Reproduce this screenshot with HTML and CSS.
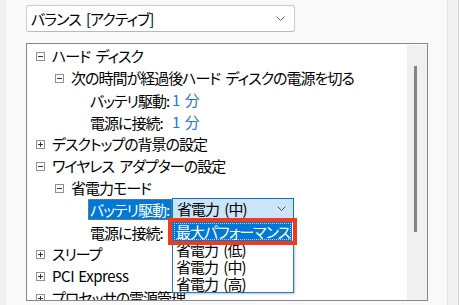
FILE: index.html
```html
<!DOCTYPE html>
<html lang="ja">
<head>
    <meta charset="UTF-8">
    <title>電源オプション - 詳細設定</title>
    <link rel="stylesheet" href="styles.css">
</head>
<body>
    <div class="window">
        <div class="edge-left"></div>
        <div class="content">
            <!-- 電源プラン -->
            <div class="plan-select">
                <span>バランス [アクティブ]</span>
                <svg class="chevron" width="9" height="5" viewBox="0 0 9 5"><polyline points="0.5,0.5 4.5,4.5 8.5,0.5" fill="none" stroke="#606060"/></svg>
            </div>

            <!-- 設定ツリー -->
            <div class="tree">
                <div class="tree-items">
                    <div class="row lv0">
                        <svg class="expander" viewBox="0 0 9 9"><rect x="0.5" y="0.5" width="8" height="8" fill="#fff" stroke="#919191"/><path d="M2 4.5h5" stroke="#333"/></svg>
                        <span>ハード ディスク</span>
                    </div>
                    <div class="row lv1">
                        <svg class="expander" viewBox="0 0 9 9"><rect x="0.5" y="0.5" width="8" height="8" fill="#fff" stroke="#919191"/><path d="M2 4.5h5" stroke="#333"/></svg>
                        <span>次の時間が経過後ハード ディスクの電源を切る</span>
                    </div>
                    <div class="row lv2">
                        <span class="label">バッテリ駆動:</span>
                        <span class="value">1 分</span>
                    </div>
                    <div class="row lv2">
                        <span class="label">電源に接続:</span>
                        <span class="value">1 分</span>
                    </div>
                    <div class="row lv0">
                        <svg class="expander" viewBox="0 0 9 9"><rect x="0.5" y="0.5" width="8" height="8" fill="#fff" stroke="#919191"/><path d="M2 4.5h5M4.5 2v5" stroke="#333"/></svg>
                        <span>デスクトップの背景の設定</span>
                    </div>
                    <div class="row lv0">
                        <svg class="expander" viewBox="0 0 9 9"><rect x="0.5" y="0.5" width="8" height="8" fill="#fff" stroke="#919191"/><path d="M2 4.5h5" stroke="#333"/></svg>
                        <span>ワイヤレス アダプターの設定</span>
                    </div>
                    <div class="row lv1">
                        <svg class="expander" viewBox="0 0 9 9"><rect x="0.5" y="0.5" width="8" height="8" fill="#fff" stroke="#919191"/><path d="M2 4.5h5" stroke="#333"/></svg>
                        <span>省電力モード</span>
                    </div>
                    <div class="row lv2 editing">
                        <span class="label selected">バッテリ駆動:</span>
                        <div class="combo">
                            <span>省電力 (中)</span>
                            <svg class="chevron" width="9" height="5" viewBox="0 0 9 5"><polyline points="0.5,0.5 4.5,4.5 8.5,0.5" fill="none" stroke="#505050"/></svg>
                            <div class="combo-list">
                                <div class="option active">最大パフォーマンス</div>
                                <div class="option">省電力 (低)</div>
                                <div class="option">省電力 (中)</div>
                                <div class="option">省電力 (高)</div>
                                <div class="mark"></div>
                            </div>
                        </div>
                    </div>
                    <div class="row lv2">
                        <span class="label">電源に接続:</span>
                    </div>
                    <div class="row lv0">
                        <svg class="expander" viewBox="0 0 9 9"><rect x="0.5" y="0.5" width="8" height="8" fill="#fff" stroke="#919191"/><path d="M2 4.5h5M4.5 2v5" stroke="#333"/></svg>
                        <span>スリープ</span>
                    </div>
                    <div class="row lv0">
                        <svg class="expander" viewBox="0 0 9 9"><rect x="0.5" y="0.5" width="8" height="8" fill="#fff" stroke="#919191"/><path d="M2 4.5h5M4.5 2v5" stroke="#333"/></svg>
                        <span class="latin">PCI Express</span>
                    </div>
                    <div class="row lv0">
                        <svg class="expander" viewBox="0 0 9 9"><rect x="0.5" y="0.5" width="8" height="8" fill="#fff" stroke="#919191"/><path d="M2 4.5h5M4.5 2v5" stroke="#333"/></svg>
                        <span>プロセッサの電源管理</span>
                    </div>
                </div>
                <div class="scrollbar"><div class="thumb"></div></div>
            </div>
        </div>
        <div class="edge-right"></div>
    </div>
</body>
</html>
```

FILE: styles.css
```css
/* Base */
body {
    margin: 0;
    font-family: "Noto Sans CJK JP", "Noto Sans", sans-serif;
    font-size: 15px;
    font-feature-settings: "palt";
    letter-spacing: -1px;
    word-spacing: 3px;
    background-color: #f9f9f9;
    color: #000;
}

.window {
    display: flex;
    height: 305px;
    overflow: hidden;
}

.edge-left {
    width: 6px;
    background-color: #efefef;
}

.content {
    flex: 1;
    padding: 5px 0 0 20px;
}

.edge-right {
    width: 10px;
    background-color: #f0f0f0;
    border-left: 1px solid #e2e2e2;
    border-right: 1px solid #d0d0d0;
}

/* Plan dropdown */
.plan-select {
    width: 269px;
    height: 27px;
    box-sizing: border-box;
    display: flex;
    align-items: center;
    justify-content: space-between;
    padding: 0 9px 0 4px;
    background: white;
    border: 1px solid #cccccc;
    border-bottom-color: #b9b9b9;
    border-radius: 3px;
    margin-bottom: 11px;
    line-height: 20px;
}

.chevron {
    flex: none;
}

/* Tree */
.tree {
    width: 402px;
    height: 258px;
    box-sizing: border-box;
    border: 1px solid #84878d;
    background: white;
    display: grid;
    grid-template-columns: 1fr 20px;
}

.tree-items {
    padding-top: 1px;
    overflow: hidden;
}

.row {
    height: 22px;
    display: flex;
    align-items: center;
    white-space: nowrap;
    line-height: 20px;
}

.lv0 {
    padding-left: 9px;
}

.lv1 {
    padding-left: 28px;
}

.lv2 {
    padding-left: 61px;
}

.expander {
    width: 9px;
    height: 9px;
    flex: none;
    margin-right: 7px;
}

.latin {
    letter-spacing: -0.4px;
    word-spacing: 1px;
}

.label {
    width: 84px;
    box-sizing: border-box;
    padding: 0 2px;
    line-height: 21px;
    flex: none;
}

.label.selected {
    background-color: #0078d7;
    color: white;
    outline: 1px dotted #c8782a;
    outline-offset: -1px;
}

.value {
    color: #1f77d4;
}

/* Open combo box */
.editing {
    align-items: flex-start;
    position: relative;
    z-index: 1;
}

.combo {
    position: relative;
    width: 122px;
    height: 21px;
    box-sizing: border-box;
    margin-top: -1px;
    display: flex;
    align-items: center;
    justify-content: space-between;
    padding: 0 7px 0 4px;
    background-color: #cce4f7;
    border: 1px solid #0078d7;
    line-height: 19px;
}

.combo-list {
    position: absolute;
    top: calc(100% + 1px);
    left: -1px;
    width: 122px;
    box-sizing: border-box;
    background: white;
    border: 1px solid #2a79c9;
    box-shadow: 1px 1px 2px rgba(0,0,0,0.25);
    padding-top: 2px;
}

.option {
    height: 17px;
    line-height: 17px;
    padding-left: 3px;
}

.option.active {
    height: 19px;
    line-height: 19px;
    margin-right: 1px;
    background-color: #0078d7;
    color: white;
    outline: 1px dotted rgba(255,255,255,0.7);
    outline-offset: -2px;
}

.mark {
    position: absolute;
    top: -2px;
    left: -5px;
    width: 129px;
    height: 27px;
    box-sizing: border-box;
    border: 4px solid #ef3b1d;
}

/* Scrollbar */
.scrollbar {
    margin-top: 1px;
    background-color: #f0f0f0;
}

.thumb {
    width: 3px;
    height: 166px;
    margin: 21px 0 0 7px;
    background-color: #858585;
}
```
